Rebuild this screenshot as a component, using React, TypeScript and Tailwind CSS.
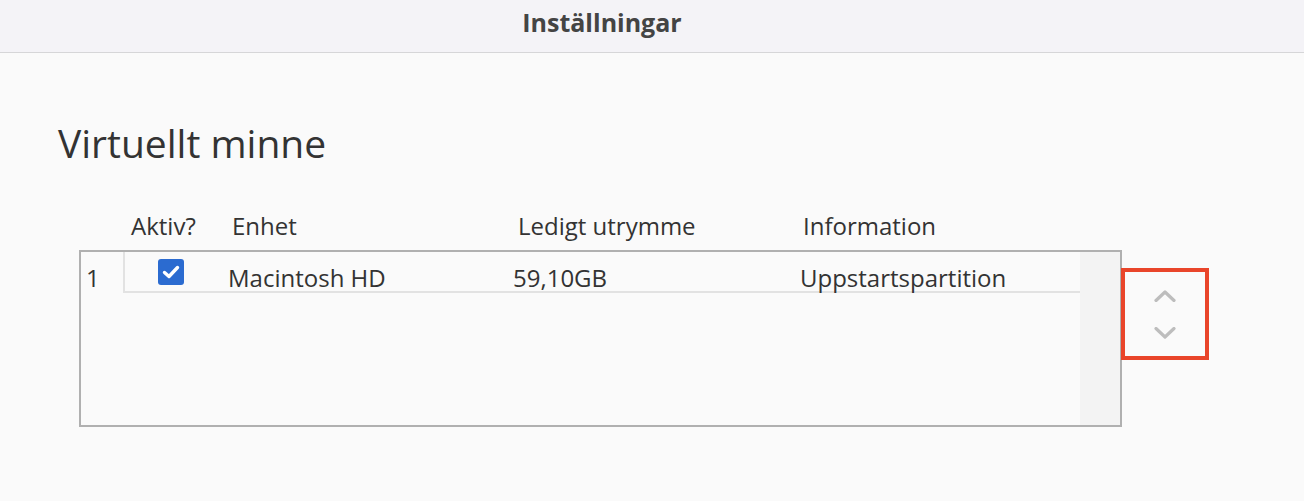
import React from 'react';

const ChevronUp: React.FC = () => (
  <svg width="22" height="12" viewBox="0 0 22 12" fill="none">
    <path d="M2 10.5 L11 2 L20 10.5" stroke="#bdbdbd" strokeWidth="3.2" strokeLinecap="round" strokeLinejoin="round" />
  </svg>
);

const ChevronDown: React.FC = () => (
  <svg width="22" height="12" viewBox="0 0 22 12" fill="none">
    <path d="M2 1.5 L11 10 L20 1.5" stroke="#bdbdbd" strokeWidth="3.2" strokeLinecap="round" strokeLinejoin="round" />
  </svg>
);

const App: React.FC = () => {
  return (
    <div
      className="w-[1304px] h-[501px] bg-[#fafafa] text-[#333333] overflow-hidden"
      style={{ fontFamily: '"Open Sans", "Noto Sans", sans-serif' }}
    >
      {/* Title bar */}
      <div className="h-[53px] bg-[#f4f3f7] border-b border-[#d6d6d8] flex items-center justify-center pr-[100px]">
        <span className="text-[25px] font-bold text-[#444444] -mt-[7px]">Inställningar</span>
      </div>

      <div className="pl-[58px] pt-[66px]">
        <h1 className="text-[39px] leading-[48px] text-[#333333]">Virtuellt minne</h1>

        {/* Column headers */}
        <div className="flex mt-[43px] text-[24px] leading-[32px] text-[#333333]">
          <div className="w-[73px]" />
          <div className="w-[101px]">Aktiv?</div>
          <div className="w-[286px]">Enhet</div>
          <div className="w-[285px]">Ledigt utrymme</div>
          <div>Information</div>
        </div>

        <div className="flex items-start mt-[8px] ml-[21px]">
          {/* Table */}
          <div className="w-[1043px] h-[177px] border-2 border-[#b0b0b0] flex">
            <div className="flex-1 flex items-start">
              <div className="w-[42px] h-[40px] pl-[5px] pt-[12px] text-[24px] leading-[28px]">1</div>
              <div className="flex-1 h-[41px] border-l-2 border-b-2 border-[#e2e2e2] flex items-start text-[24px] leading-[28px]">
                <div className="w-[103px] pl-[33px] pt-[7px]">
                  <div className="w-[26px] h-[26px] rounded-[3px] bg-[#2b6bd0] flex items-center justify-center">
                    <svg width="18" height="14" viewBox="0 0 18 14" fill="none">
                      <path d="M2.5 7.5 L7 11.5 L15.5 2.5" stroke="#ffffff" strokeWidth="3.4" strokeLinecap="round" strokeLinejoin="round" />
                    </svg>
                  </div>
                </div>
                <div className="w-[285px] pt-[12px]">Macintosh HD</div>
                <div className="w-[287px] pt-[12px]">59,10GB</div>
                <div className="pt-[12px]">Uppstartspartition</div>
              </div>
            </div>
            <div className="w-[40px] h-full bg-[#f3f3f3]" />
          </div>

          {/* Highlighted stepper */}
          <div className="-ml-[1px] mt-[18px] w-[88px] h-[92px] border-[4px] border-[#e9452a] flex flex-col items-center justify-center gap-[25px]">
            <ChevronUp />
            <ChevronDown />
          </div>
        </div>
      </div>
    </div>
  );
};

export default App;
